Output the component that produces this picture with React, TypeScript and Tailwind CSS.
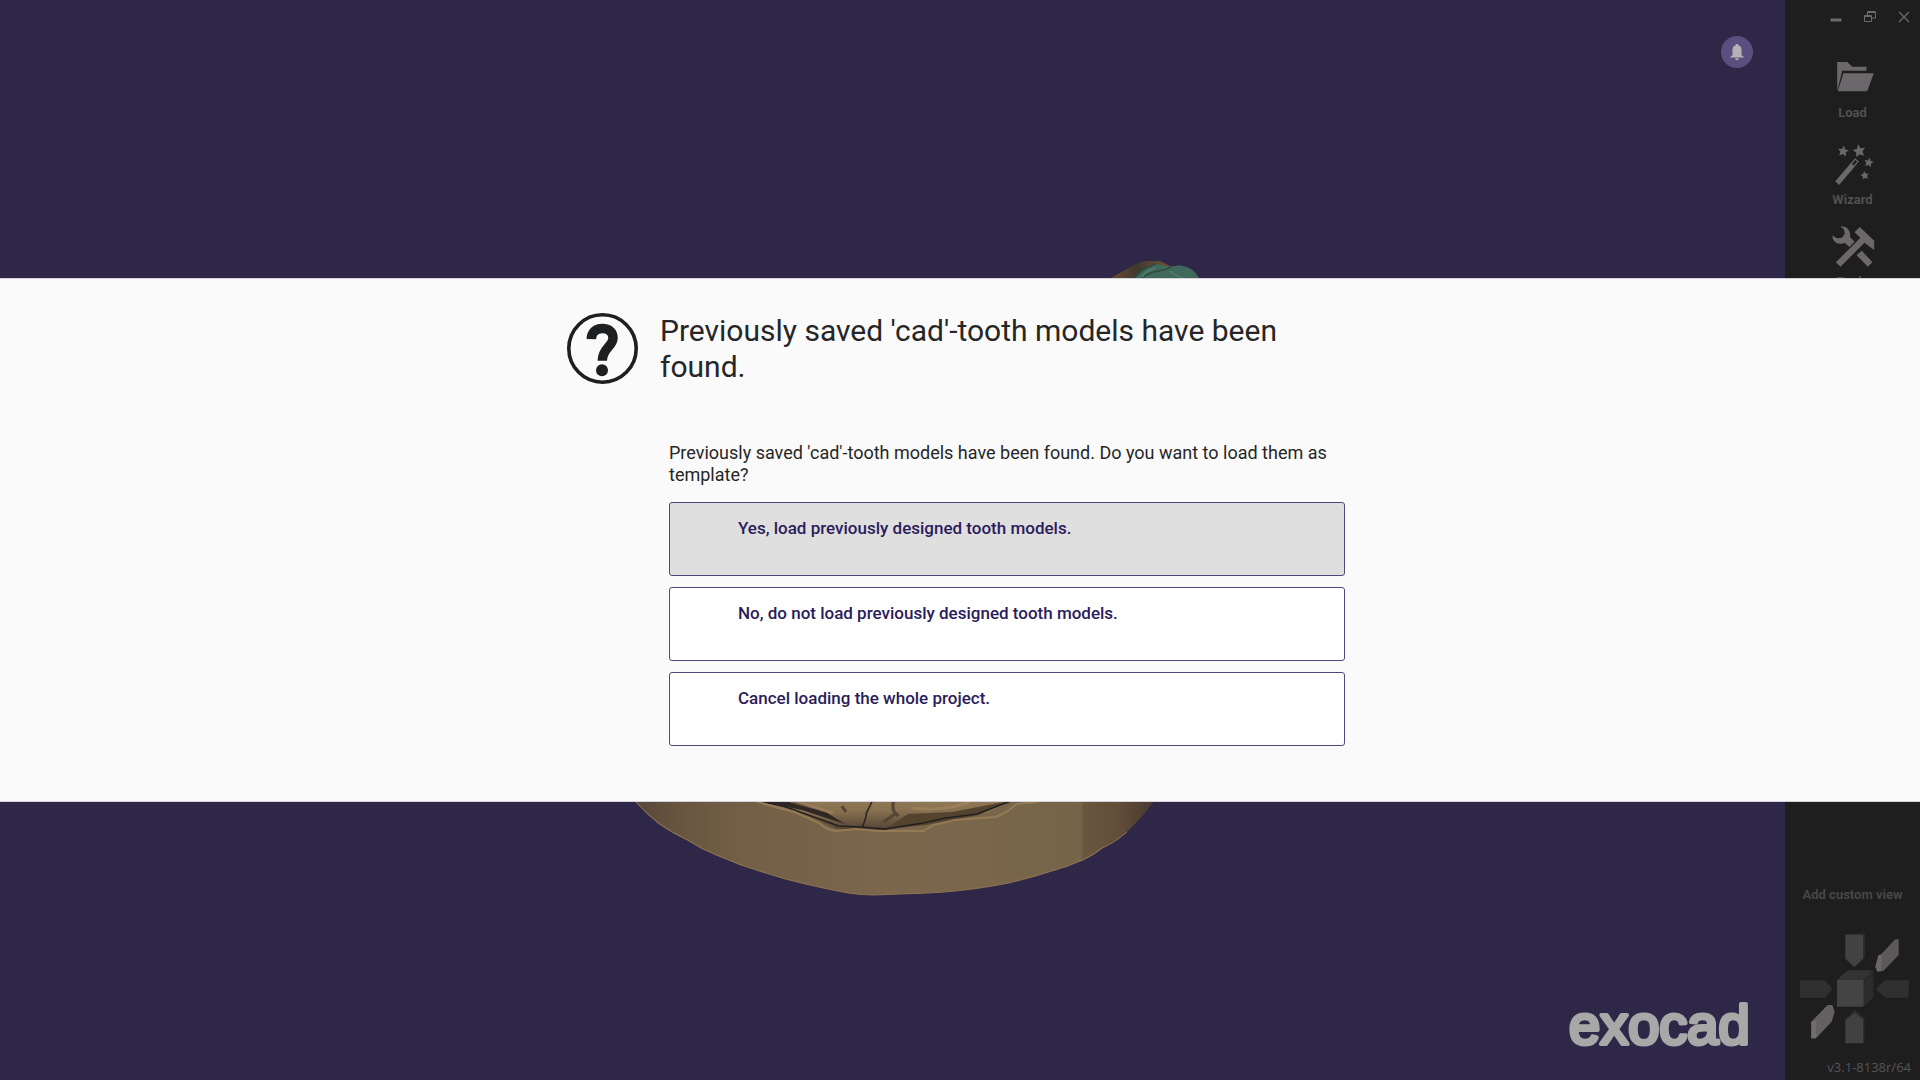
import React from 'react';

interface ToolButtonProps {
  label: string;
  children: React.ReactNode;
}

const ToolButton: React.FC<ToolButtonProps> = ({ label, children }) => (
  <button type="button" className="flex flex-col items-center gap-1.5 text-[#6b676a]">
    {children}
    <span className="text-[13px] leading-4 font-bold text-[#505051]">{label}</span>
  </button>
);

const FolderIcon = () => (
  <svg width="44" height="42" viewBox="0 0 44 42" fill="currentColor" aria-hidden="true">
    <path d="M6.200 5h10l5 4.700h14.300v4H11.200L7.300 30 6.200 34z" />
    <path d="M12.300 16.200h30.500l-6.600 18.100H6.800z" />
  </svg>
);

const Star: React.FC<{ x: number; y: number; size: number; turn: number }> = ({ x, y, size, turn }) => (
  <path
    transform={`translate(${x} ${y}) rotate(${turn}) scale(${size})`}
    d="M0-1L.28-.36.95-.31.46.14.59.81 0 .48-.59.81-.46.14-.95-.31-.28-.36z"
  />
);

const WandIcon = () => (
  <svg width="44" height="47" viewBox="0 0 44 47" fill="currentColor" aria-hidden="true">
    <path d="M4.300 42.300L19.500 24.500l4 3.600L8 45.900z" />
    <path d="M20 25l4.200-5 2.800 2.500-4.200 5z" fill="none" stroke="currentColor" strokeWidth="1.200" />
    <Star x={12.2} y={12.3} size={5.8} turn={8} />
    <Star x={28.2} y={12} size={6.8} turn={-10} />
    <Star x={37.8} y={23.5} size={5.1} turn={12} />
    <Star x={33.8} y={36.5} size={4.5} turn={-10} />
  </svg>
);

const ToolsIcon = () => (
  <svg width="44" height="42" viewBox="0 0 44 42" fill="currentColor" aria-hidden="true">
    <path d="M4.800 36.300L29.500 11.700l-6-5.400L28.800 1l14.400 13.700V24l-9.700-7.300-24 24z" />
    <path d="M30.800 24.700l10.700 11.600-4.700 4.400L25.500 29z" />
    <path d="M1.500 9.500l4.500 2.700 5-.5 2.800-4L12.800 3.200 9.500.8C15-.5 20 4 19 11l4.500 4.700-5.200 5.300L14 17C7.500 19.500.8 15.800 1.500 9.500z" />
  </svg>
);

const ViewCube = () => (
  <svg width="125" height="125" viewBox="0 0 375 375" role="img" aria-label="View cube">
    <path d="M166 30h54v71l-27 25-27-25z" fill="#434343" />
    <path d="M166 30l4-4h54l-4 4zM220 30l4-4v72l-4 4z" fill="#303030" />
    <path d="M166 355h54v-70l-25-22-29 22z" fill="#414141" />
    <path d="M195 256l-29 27v3l29-24 25 24v69l3-3v-72z" fill="#313131" />
    <path d="M30 166h75l22 26-22 26H30z" fill="#303030" />
    <path d="M356 166h-70l-28 26 28 26h70z" fill="#303030" />
    <path d="M141 165l32-29h77l-29 29z" fill="#333333" />
    <path d="M250 136v81l-29 28v-80z" fill="#2b2b2b" />
    <path d="M141 165h80v80h-80z" fill="#444444" />
    <path d="M326 42v48l-47 49-18-3 6-41 47-51z" fill="#5d585b" />
    <path d="M256 125l9-34 12-3-4 51-11 1z" fill="#6b6769" />
    <path d="M64 290l49-50h14l7 20-9 30-47 50H64z" fill="#656064" />
    <path d="M64 290l14-2v52H64z" fill="#716c6f" />
  </svg>
);

const DentalModel = () => (
  <svg
    className="absolute inset-0 h-full w-full"
    viewBox="0 0 1785 1080"
    preserveAspectRatio="xMidYMid slice"
    aria-hidden="true"
  >
    <defs>
      <linearGradient id="plaster" gradientUnits="userSpaceOnUse" x1="635" y1="0" x2="1118" y2="0">
        <stop offset="0" stopColor="#574737" />
        <stop offset="0.08" stopColor="#67553f" />
        <stop offset="0.2" stopColor="#725f46" />
        <stop offset="0.5" stopColor="#7c674d" />
        <stop offset="0.86" stopColor="#756448" />
        <stop offset="0.865" stopColor="#69563f" />
        <stop offset="0.93" stopColor="#624f3a" />
        <stop offset="1" stopColor="#493a30" />
      </linearGradient>
      <linearGradient id="palate" gradientUnits="userSpaceOnUse" x1="0" y1="790" x2="0" y2="832">
        <stop offset="0" stopColor="#9a825d" />
        <stop offset="0.5" stopColor="#87704f" />
        <stop offset="1" stopColor="#4b3e32" />
      </linearGradient>
      <linearGradient id="gum" gradientUnits="userSpaceOnUse" x1="1110" y1="278" x2="1165" y2="262">
        <stop offset="0" stopColor="#6a4d33" />
        <stop offset="0.5" stopColor="#3f3830" />
        <stop offset="1" stopColor="#6a5137" />
      </linearGradient>
    </defs>
    {/* crown above the dialog */}
    <path d="M1104 282L1130 267Q1140 261 1147 261H1160L1172 267V282z" fill="url(#gum)" />
    <path d="M1133 282Q1140 269 1157 264L1169 267Q1181 263 1191 269 1197 273 1201 282z" fill="#41695b" />
    <path d="M1133 279Q1141 269 1156 264M1139 281Q1146 273 1158 271T1171 266" fill="none" stroke="#2b4b42" strokeWidth="1.500" />
    <path d="M1170 271q8 7 20 9M1142 277q6-8 14-9" fill="none" stroke="#4f7f6c" strokeWidth="1.500" />
    {/* model base below the dialog */}
    <g transform="translate(-44.3 0) scale(1.0714 1)">
      <path
        d="M625 790L635 802Q645 814 657 824 669 833 683 840 696 849 710 855 731 865 753 872 773 879 793 884 813 889 833 893 845 895 857 895L907 893 923 892Q955 889 983 883 1003 878 1020 872 1037 867 1052 860 1062 855 1070 848 1083 842 1093 832 1107 818 1118 802L1125 790z"
        fill="url(#plaster)"
      />
      <path
        d="M635 802Q645 814 657 824 669 833 683 840 696 849 710 855 731 865 753 872 773 879 793 884 813 889 833 893 845 895 857 895L907 893 923 892Q955 889 983 883 1003 878 1020 872 1037 867 1052 860 1062 855 1070 848 1083 842 1093 832"
        fill="none"
        stroke="#8c7350"
        strokeWidth="1"
      />
      <path d="M735 790L750 802 785 812 822 829 867 830 903 825 933 818 960 814 995 796V790z" fill="url(#palate)" />
      <path d="M752 802L790 810 830 824 812 812 778 800z" fill="#2e2724" />
      <path d="M846 827Q850 818 850 813L856 800" fill="none" stroke="#2c2524" strokeWidth="1.500" />
      <path d="M876 800q-4 10 4 16M831 812l-4-6M866 822l12-9" fill="none" stroke="#574635" strokeWidth="3" />
      <path d="M869 828L889 814 930 812 983 801 955 815 905 825z" fill="#54442f" />
      <path d="M779 801l40 12M892 808q36 4 60-9" fill="none" stroke="#a98c62" strokeWidth="3" opacity="0.5" />
      <path d="M753 802Q772 805 788 812L824 826 845 827 867 829 903 823 924 818 953 814 985 801" fill="none" stroke="#241f1f" strokeWidth="1.500" />
      <path d="M747 801Q765 808 783 812L806 823Q814 831 822 831L840 829 860 831 903 831 913 825 933 820 970 817Q980 814 990 804L1010 802" fill="none" stroke="#947a55" strokeWidth="2" />
    </g>
  </svg>
);

const ANSWERS = [
  { text: 'Yes, load previously designed tooth models.', highlighted: true },
  { text: 'No, do not load previously designed tooth models.', highlighted: false },
  { text: 'Cancel loading the whole project.', highlighted: false },
];

const App: React.FC = () => (
  <div className="relative flex min-h-screen bg-[#2f2747] font-['Roboto',sans-serif]">
    <main className="relative flex flex-1 flex-col items-end justify-between pt-9 pr-8 pb-4">
      <DentalModel />
      <button type="button" aria-label="Notifications" className="relative flex size-8 items-center justify-center rounded-full bg-[#5b4f7f]">
        <svg width="14" height="17" viewBox="0 0 14 17" fill="#b4b2b4" aria-hidden="true">
          <path d="M7 0c.8 0 1.300.5 1.400 1.200C10.600 1.800 11.500 3.500 11.500 6v4.500c0 1 .8 1.700 2.200 2.200v.8H.3v-.8c1.400-.5 2.200-1.200 2.200-2.200V6c0-2.500.9-4.200 3.100-4.800C5.700.5 6.200 0 7 0zM5.200 14.300h3.600C8.700 15.500 8 16.200 7 16.200s-1.700-.7-1.800-1.900z" />
        </svg>
      </button>
      <svg className="relative overflow-visible" width="192" height="80" viewBox="0 0 192 80" role="img" aria-label="exocad">
        <text
          x="8"
          y="60"
          className="font-['Liberation_Sans',sans-serif] text-[56px]"
          fill="#a9a8a9"
          stroke="#a9a8a9"
          strokeWidth="4"
          strokeLinejoin="round"
        >
          exocad
        </text>
      </svg>
    </main>

    <aside className="flex w-[135px] flex-col items-center justify-between bg-[#1e1e1e]">
      <div className="flex w-full flex-col items-center">
        <div className="flex w-full justify-end gap-[22px] pt-[11px] pr-[10px] text-[#6a6a6a]">
          <button type="button" aria-label="Minimize">
            <svg width="12" height="12" viewBox="0 0 12 12" aria-hidden="true">
              <path d="M.5 7.500h11v3H.5z" fill="currentColor" />
            </svg>
          </button>
          <button type="button" aria-label="Restore">
            <svg width="12" height="12" viewBox="0 0 12 12" fill="none" stroke="currentColor" aria-hidden="true">
              <path d="M.5 4.500h7v6h-7zM.5 5.500h7M3.500 4V.5h8v6.500H8M3.500 1.500h8" />
            </svg>
          </button>
          <button type="button" aria-label="Close">
            <svg width="12" height="12" viewBox="0 0 12 12" stroke="currentColor" strokeWidth="1.300" aria-hidden="true">
              <path d="M1 1l10 10M11 1L1 11" />
            </svg>
          </button>
        </div>
        <nav className="mt-[34px] flex flex-col items-center gap-[18px]">
          <ToolButton label="Load"><FolderIcon /></ToolButton>
          <ToolButton label="Wizard"><WandIcon /></ToolButton>
          <ToolButton label="Tools"><ToolsIcon /></ToolButton>
        </nav>
      </div>
      <div className="flex w-full flex-col items-center pb-[3px]">
        <button type="button" className="text-[13px] leading-4 font-bold text-[#464647]">Add custom view</button>
        <div className="mt-[22px]">
          <ViewCube />
        </div>
        <p className="mt-[7px] self-end pr-[9px] font-['Open_Sans',sans-serif] text-[13px] leading-5 text-[#555556]">v3.1-8138r/64</p>
      </div>
    </aside>

    <div className="absolute inset-0 flex items-center">
      <section
        role="dialog"
        aria-labelledby="dialog-title"
        aria-describedby="dialog-text"
        className="w-full border-y border-[#d5d2dd] bg-[#fafafa] pt-[34px] pb-[55px]"
      >
        <div className="mx-auto w-full max-w-[786px]">
          <header className="flex gap-[22px] pb-px">
            <svg className="shrink-0" width="71" height="71" viewBox="0 0 71 71" fill="none" stroke="#1d1f21" aria-hidden="true">
              <circle cx="35.500" cy="35.500" r="33.700" strokeWidth="3.600" />
              <path d="M24.300 26.200C24.500 19 28.800 15.500 35.300 15.500c6.700 0 10.700 3.500 10.700 9.500C46 33.500 35.300 35 35.300 47.700" strokeWidth="9.500" />
              <circle cx="35" cy="57.200" r="6" fill="#1d1f21" stroke="none" />
            </svg>
            <h1 id="dialog-title" className="max-w-[640px] text-[30px] leading-9 font-normal text-[#262626]">
              Previously saved 'cad'-tooth models have been found.
            </h1>
          </header>
          <div className="mt-14 mr-2 ml-[102px]">
            <p id="dialog-text" className="text-[18px] leading-[22px] text-[#262626]">
              Previously saved 'cad'-tooth models have been found. Do you want to load them as template?
            </p>
            <div className="mt-4 flex flex-col gap-[11px]">
              {ANSWERS.map(({ text, highlighted }) => (
                <button
                  key={text}
                  type="button"
                  className={`h-[74px] w-full rounded-[3px] border border-[#51477a] pb-5 pl-[68px] text-left text-[17px] font-medium text-[#2b1c5c] ${highlighted ? 'bg-[#dfdfdf]' : 'bg-white'}`}
                >
                  {text}
                </button>
              ))}
            </div>
          </div>
        </div>
      </section>
    </div>
  </div>
);

export default App;
